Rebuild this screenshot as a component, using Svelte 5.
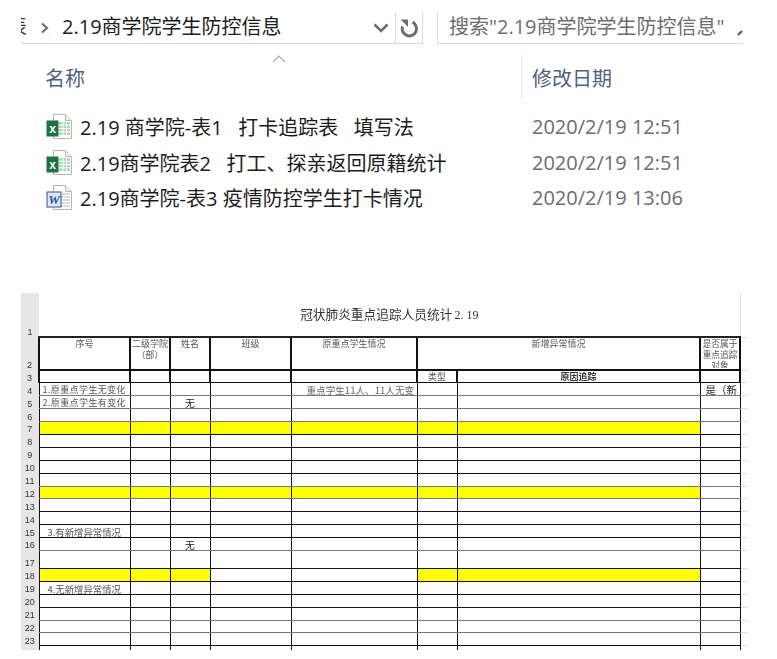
<script>
	const files = [
		{ name: '2.19 商学院-表1   打卡追踪表   填写法', date: '2020/2/19 12:51', type: 'excel' },
		{ name: '2.19商学院表2   打工、探亲返回原籍统计', date: '2020/2/19 12:51', type: 'excel' },
		{ name: '2.19商学院-表3 疫情防控学生打卡情况', date: '2020/2/19 13:06', type: 'word' }
	];

	// soft = the row's bottom line came out grey in the downscaled sheet
	const rows = [
		{ n: 4, label: '1.原重点学生无变化', status: '重点学生11人、11人无变', last: '是（新', soft: true },
		{ n: 5, label: '2.原重点学生有变化', person: '无', soft: true },
		{ n: 6, soft: true },
		{ n: 7, fill: 'all' },
		{ n: 8 },
		{ n: 9 },
		{ n: 10 },
		{ n: 11, soft: true },
		{ n: 12, fill: 'all', soft: true },
		{ n: 13 },
		{ n: 14 },
		{ n: 15, label: '3.有新增异常情况', indent: true },
		{ n: 16, person: '无', soft: true },
		{ n: 17, tall: true },
		{ n: 18, fill: 'split' },
		{ n: 19, label: '4.无新增异常情况', indent: true },
		{ n: 20 },
		{ n: 21, soft: true },
		{ n: 22, soft: true },
		{ n: 23 },
		{ n: 24 }
	];

	const cols = [91, 40, 40, 81, 126, 40, 243, 40];

	function filled(row, col) {
		if (row.fill === 'all') return col < 7;
		if (row.fill === 'split') return col < 3 || col === 5 || col === 6;
		return false;
	}
</script>

{#snippet fileIcon(type)}
	<svg class="file-icon" width="26" height="25" viewBox="0 0 26 25">
		<path d="M7.5.5h12l6 6v18h-18z" fill="#fff" stroke="#b5b5b5" />
		<path d="M19.5.5v6h6" fill="#eee" stroke="#b5b5b5" />
		{#if type === 'excel'}
			<path d="M13 8h11v13H13z" fill="#a9d8b8" />
			<path d="M13 11.2h11M13 14.5h11M13 17.8h11M17 8v13M20.5 8v13" stroke="#fff" />
			<rect x="0.5" y="6.5" width="12" height="16" fill="#1e7145" />
			<text class="badge-x" x="6.5" y="18.5">x</text>
		{:else}
			<path d="M15 9h9M15 12h9M15 15h9M15 18h9M15 21h9" stroke="#b9b9b9" />
			<rect x="1" y="7" width="14" height="15" fill="#dce8f7" stroke="#2b5797" />
			<text class="badge-w" x="8" y="19">W</text>
		{/if}
	</svg>
{/snippet}

<div class="page">
	<div class="top">
		<div class="address">
			<span class="cut"><span>表</span></span>
			<svg class="crumb" width="10" height="12" viewBox="0 0 10 12">
				<path d="M2 1.5 7 6l-5 4.5" fill="none" stroke="#6e6e6e" stroke-width="2.2" />
			</svg>
			<span class="path">2.19商学院学生防控信息</span>
			<svg class="drop" width="16" height="10" viewBox="0 0 16 10">
				<path d="M1.5 1.5 8 8l6.5-6.5" fill="none" stroke="#6e6e6e" stroke-width="2.6" />
			</svg>
			<span class="refresh">
				<svg width="20" height="22" viewBox="0 0 20 22">
					<path d="M13.5 5.2a7.2 7.2 0 1 1-10 4.2" fill="none" stroke="#6e6e6e" stroke-width="3" />
					<path d="M1.5 2.5h7.5v7.5z" fill="#6e6e6e" />
				</svg>
			</span>
		</div>
		<div class="search">
			<span>搜索"2.19商学院学生防控信息"</span>
			<svg class="lens" width="6" height="8" viewBox="0 0 6 8">
				<path d="M1 7 5 3" stroke="#555" stroke-width="2" />
			</svg>
		</div>
	</div>

	<div class="columns">
		<svg class="sort" width="14" height="8" viewBox="0 0 14 8">
			<path d="M1 7 7 1l6 6" fill="none" stroke="#a9a9a9" stroke-width="1.2" />
		</svg>
		<div class="col-name"><span>名称</span></div>
		<div class="col-date"><span>修改日期</span></div>
	</div>

	<div class="list">
		{#each files as file}
			<div class="file">
				{@render fileIcon(file.type)}
				<span class="file-name">{file.name}</span>
				<span class="file-date">{file.date}</span>
			</div>
		{/each}
	</div>

	<div class="sheet">
		<table>
			<colgroup>
				<col style="width: 18px" />
				{#each cols as w}
					<col style="width: {w}px" />
				{/each}
				<col style="width: 8px" />
			</colgroup>
			<tbody>
				<tr class="r-title">
					<th class="num">1</th>
					<td colspan="8" class="title">冠状肺炎重点追踪人员统计<span class="title-no">2. 19</span></td>
					<td class="over edge"></td>
				</tr>
				<tr class="r-head">
					<th class="num">2</th>
					<td class="head">序号</td>
					<td class="head"><div>二级学院<br />（部）</div></td>
					<td class="head">姓名</td>
					<td class="head">班级</td>
					<td class="head">原重点学生情况</td>
					<td class="head" colspan="2">新增异常情况</td>
					<td class="head last-head"><div>是否属于<br />重点追踪<br />对象</div></td>
					<td class="over"></td>
				</tr>
				<tr class="r-sub">
					<th class="num">3</th>
					<td class="sub"></td>
					<td class="sub"></td>
					<td class="sub"></td>
					<td class="sub"></td>
					<td class="sub"></td>
					<td class="sub kind">类型</td>
					<td class="sub reason">原因追踪</td>
					<td class="sub"></td>
					<td class="over"></td>
				</tr>
				{#each rows as row}
					<tr class:tall={row.tall} class:soft={row.soft}>
						<th class="num">{row.n}</th>
						{#each cols as _, i}
							<td class:yellow={filled(row, i)}>
								{#if i === 0 && row.label}
									<span class="label" class:indent={row.indent}>{row.label}</span>
								{:else if i === 2 && row.person}
									<span class="person">{row.person}</span>
								{:else if i === 4 && row.status}
									<span class="status">{row.status}</span>
								{:else if i === 7 && row.last}
									<span class="last">{row.last}</span>
								{/if}
							</td>
						{/each}
						<td class="over"></td>
					</tr>
				{/each}
			</tbody>
		</table>
	</div>
</div>

<style>
	:global(body) {
		background: #fff;
	}

	.page {
		width: 777px;
		height: 659px;
		overflow: hidden;
		background: #fff;
		font-family: 'Open Sans', 'Noto Sans CJK SC', sans-serif;
	}

	.top {
		display: flex;
		gap: 14px;
		width: 722px;
		margin-left: 21px;
		padding-top: 12px;
	}

	.address {
		display: flex;
		align-items: center;
		width: 402px;
		height: 32px;
		box-sizing: border-box;
		border-bottom: 1px solid #d9d9d9;
	}

	.cut {
		width: 6px;
		overflow: hidden;
		padding-bottom: 2px;
		font-size: 20px;
		line-height: 28px;
		color: #333;
		white-space: nowrap;
	}

	.cut span {
		display: block;
		margin-left: -14px;
	}

	.crumb {
		margin-left: 13px;
	}

	.path {
		margin-left: 12px;
		padding-bottom: 2px;
		font-size: 20px;
		line-height: 28px;
		color: #1c1c1c;
		white-space: nowrap;
	}

	.drop {
		margin-left: auto;
		margin-right: 6px;
	}

	.refresh {
		display: flex;
		align-items: center;
		justify-content: center;
		width: 28px;
		height: 31px;
		box-sizing: border-box;
		border-left: 1px solid #d9d9d9;
		border-right: 1px solid #d9d9d9;
	}

	.search {
		display: flex;
		align-items: center;
		width: 306px;
		height: 32px;
		box-sizing: border-box;
		padding-left: 11px;
		border-left: 1px solid #d9d9d9;
		border-bottom: 1px solid #d9d9d9;
		font-size: 20px;
		line-height: 28px;
		color: #6d6d6d;
		white-space: nowrap;
	}

	.search span {
		padding-bottom: 2px;
	}

	.lens {
		margin-left: auto;
		margin-top: 8px;
	}

	.columns {
		position: relative;
		display: flex;
		height: 44px;
		margin-top: 11px;
		font-size: 20px;
		line-height: 44px;
		color: #4f6280;
	}

	.columns span {
		position: relative;
		top: 2px;
	}

	.sort {
		position: absolute;
		left: 272px;
		top: 0;
	}

	.col-name {
		width: 476px;
		padding-left: 45px;
		border-right: 1px solid #e5e5e5;
	}

	.col-date {
		padding-left: 10px;
	}

	.list {
		margin-top: 10px;
	}

	.file {
		display: grid;
		grid-template-columns: 26px 460px auto;
		align-items: center;
		height: 35.5px;
		padding-left: 46px;
		font-size: 20px;
		white-space: pre;
	}

	.file-icon {
		display: block;
	}

	.file-name {
		margin-left: 8px;
		color: #1c1c1c;
	}

	.file-date {
		color: #6d6d6d;
	}

	.badge-x {
		font: bold 12px 'Liberation Sans', sans-serif;
		text-anchor: middle;
		fill: #fff;
	}

	.badge-w {
		font: italic bold 13px 'Liberation Serif', serif;
		text-anchor: middle;
		fill: #2b5797;
	}

	.sheet {
		height: 357px;
		margin-top: 77.5px;
		margin-left: 21px;
		overflow: hidden;
		filter: blur(0.3px);
	}

	table {
		table-layout: fixed;
		width: 727px;
		border-collapse: collapse;
		font-family: 'Noto Sans CJK SC', sans-serif;
		font-size: 9px;
		color: #555;
	}

	tr {
		height: 12.9px;
	}

	tr.tall {
		height: 18px;
	}

	.r-title {
		height: 44px;
	}

	.r-head {
		height: 33px;
	}

	td {
		padding: 0;
		border: 1px solid #111;
		line-height: 10px;
		white-space: nowrap;
		overflow: hidden;
	}

	tr.soft > td:not(.over) {
		border-bottom-color: #777;
	}

	.num {
		padding: 0;
		border: 0;
		background: #e6e6e6;
		font-family: 'Liberation Sans', sans-serif;
		font-size: 9px;
		font-weight: normal;
		line-height: 10px;
		color: #333;
		text-align: center;
		vertical-align: bottom;
	}

	td.over {
		border: 0;
		border-bottom: 1px solid #e2e2e2;
	}

	td.edge {
		border-left: 1px solid #d9d9d9;
	}

	td.title {
		border: 0;
		border-bottom: 2px solid #222;
		border-right: 1px solid #d9d9d9;
		font-size: 12.7px;
		line-height: 16px;
		color: #333;
		text-align: center;
	}

	.title-no {
		margin-left: 2px;
		font-family: 'Liberation Serif', serif;
		font-size: 12px;
	}

	td.head {
		border: 2px solid #111;
		line-height: 11px;
		text-align: center;
		vertical-align: top;
	}

	td.head div {
		height: 30px;
		overflow: hidden;
	}

	td.last-head {
		font-size: 8.7px;
	}

	td.sub {
		border-left: 2px solid #111;
		border-right: 2px solid #111;
		border-top: 2px solid #111;
		text-align: center;
	}

	td.kind {
		border: 1px solid #ddd;
		border-top: 2px solid #111;
		border-bottom: 1px solid #111;
		border-left: 1px solid #ddd;
	}

	td.reason {
		font-weight: bold;
		color: #333;
	}

	.yellow {
		background: #ffff00;
	}

	.label {
		position: relative;
		top: 1px;
		display: block;
		padding-left: 3px;
		letter-spacing: 0.4px;
	}

	.label.indent {
		padding-left: 8px;
		font-size: 9.4px;
		letter-spacing: 0;
	}

	.person {
		position: relative;
		top: 1px;
		display: block;
		font-size: 10px;
		color: #222;
		text-align: center;
	}

	.status {
		position: relative;
		top: 1px;
		display: block;
		padding-left: 15px;
		font-size: 9.6px;
		color: #666;
	}

	.last {
		position: relative;
		top: 1px;
		display: block;
		padding-left: 5px;
		font-size: 10.5px;
		color: #222;
	}
</style>
